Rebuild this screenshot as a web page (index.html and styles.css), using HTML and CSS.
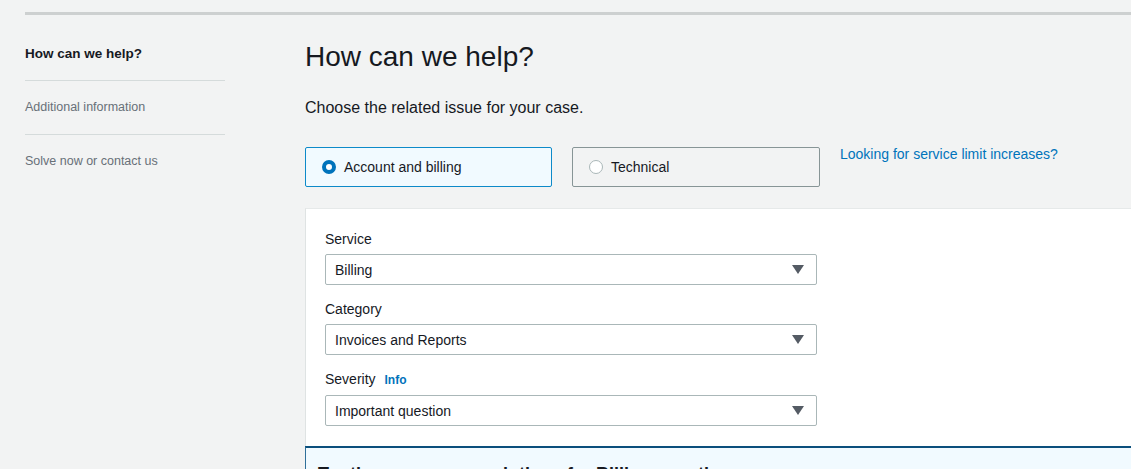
FILE: index.html
```html
<!DOCTYPE html>
<html lang="en">
<head>
<meta charset="utf-8">
<title>Create case - How can we help?</title>
<link rel="stylesheet" href="styles.css">
</head>
<body>
<div class="topline"></div>
<div class="layout">
  <nav class="steps">
    <div class="step step-active">How can we help?</div>
    <div class="step">Additional information</div>
    <div class="step step-last">Solve now or contact us</div>
  </nav>
  <main class="main">
    <h1 class="title">How can we help?</h1>
    <p class="intro">Choose the related issue for your case.</p>
    <div class="choices">
      <div class="card card-selected">
        <span class="radio radio-on"></span>
        <span class="card-label">Account and billing</span>
      </div>
      <div class="card">
        <span class="radio"></span>
        <span class="card-label">Technical</span>
      </div>
      <a class="limit-link" href="#">Looking for service limit increases?</a>
    </div>
    <section class="panel">
      <div class="field">
        <div class="label">Service</div>
        <div class="select"><span>Billing</span><span class="caret"></span></div>
      </div>
      <div class="field">
        <div class="label">Category</div>
        <div class="select"><span>Invoices and Reports</span><span class="caret"></span></div>
      </div>
      <div class="field">
        <div class="label">Severity <a class="info" href="#">Info</a></div>
        <div class="select"><span>Important question</span><span class="caret"></span></div>
      </div>
    </section>
    <section class="solutions">
      <h2 class="solutions-title">Try these common solutions for Billing questions</h2>
    </section>
  </main>
</div>
</body>
</html>
```
FILE: styles.css
```css
* { box-sizing: border-box; }

html, body {
  margin: 0;
  padding: 0;
  background: #f2f3f3;
  font-family: "Liberation Sans", Arial, sans-serif;
  color: #16191f;
  overflow: hidden;
}

.topline {
  margin: 12px 0 0 25px;
  height: 3px;
  background: #cdd0d0;
}

.layout {
  display: grid;
  grid-template-columns: 200px 1fr;
  column-gap: 80px;
  padding-left: 25px;
}

.steps {
  padding-top: 12px;
}

.step {
  font-size: 12.5px;
  line-height: 17px;
  padding: 18px 0 18px 0;
  color: #687078;
  border-bottom: 1px solid #d5dbdb;
}

.step-active {
  font-size: 13.5px;
  font-weight: bold;
  color: #16191f;
}

.step-last {
  border-bottom: none;
}

.main {
  padding-top: 25px;
  min-width: 0;
}

.title {
  margin: 0;
  font-size: 28px;
  line-height: 34px;
  font-weight: normal;
}

.intro {
  margin: 23px 0 0 0;
  font-size: 16px;
  line-height: 22px;
}

.choices {
  display: flex;
  align-items: flex-start;
  gap: 20px;
  margin-top: 28px;
}

.card {
  width: 248px;
  height: 40px;
  display: flex;
  align-items: center;
  gap: 8px;
  padding-left: 16px;
  border: 1px solid #879596;
  border-radius: 2px;
  font-size: 14px;
}

.card-selected {
  width: 247px;
  border-color: #0d8ac9;
  background: #f1faff;
}

.radio {
  width: 14px;
  height: 14px;
  border-radius: 50%;
  border: 1.5px solid #aab7b8;
  background: #fff;
  flex: none;
}

.radio-on {
  border: 4px solid #0073bb;
}

.limit-link {
  font-size: 14px;
  line-height: 16px;
  margin-top: -1px;
  color: #0073bb;
  text-decoration: none;
}

.panel {
  margin-top: 21px;
  background: #fff;
  border-top: 1px solid #e6e9e9;
  border-left: 1px solid #dfe3e3;
  padding: 20px 0 20px 19px;
}

.field + .field {
  margin-top: 14px;
}

.label {
  font-size: 14px;
  line-height: 20px;
  margin-bottom: 5px;
}

.info {
  font-size: 12px;
  font-weight: bold;
  color: #0073bb;
  text-decoration: none;
  margin-left: 5px;
}

.select {
  width: 492px;
  height: 31px;
  display: flex;
  align-items: center;
  justify-content: space-between;
  padding: 0 12px 0 9px;
  border: 1px solid #aab7b8;
  border-radius: 2px;
  background: #fff;
  font-size: 14px;
}

.caret {
  width: 0;
  height: 0;
  border-left: 6px solid transparent;
  border-right: 6px solid transparent;
  border-top: 9px solid #545b64;
}

.solutions {
  background: #f1faff;
  border-top: 2px solid #0b4f7c;
  border-left: 1px solid #2f6f99;
  padding: 15px 0 20px 12px;
}

.solutions-title {
  margin: 0;
  font-size: 18px;
  line-height: 22px;
  font-weight: bold;
}
```
